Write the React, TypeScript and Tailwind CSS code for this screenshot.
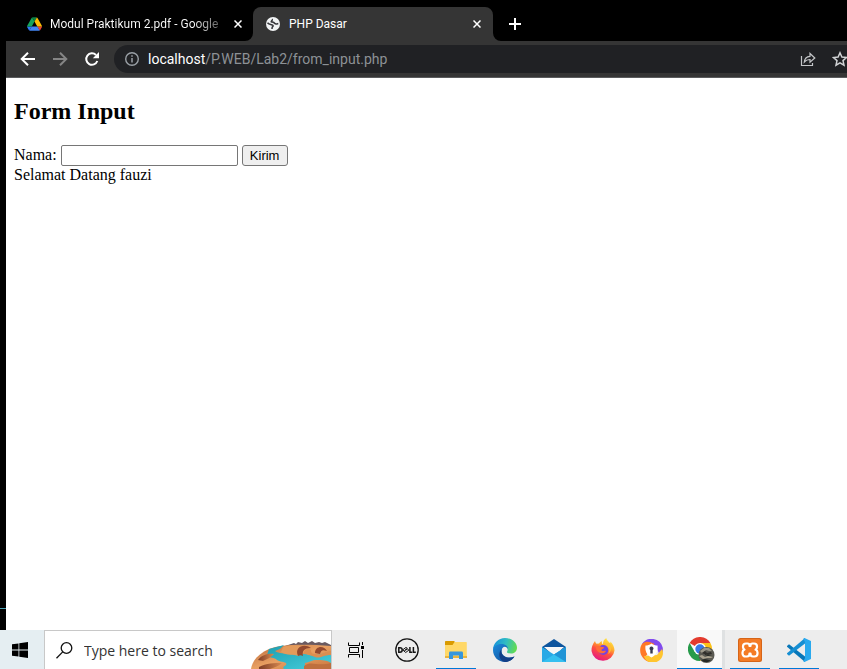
import type { ReactNode } from "react";

function DriveIcon() {
  return (
    <svg width="15" height="14" viewBox="0 0 87 78" aria-hidden="true">
      <path d="M6.6 66.9 10.4 73.500c.8 1.400 2 2.500 3.300 3.300L27.500 53H0c0 1.500.4 3.100 1.200 4.500z" fill="#2f7bf6" />
      <path d="M43.600 25 29.900 1.200c-1.400.8-2.500 1.900-3.300 3.300L1.200 48.500A9 9 0 0 0 0 53h27.500z" fill="#16a35a" />
      <path d="M73.600 76.800c1.300-.8 2.500-1.900 3.300-3.300l9.200-16c.8-1.400 1.200-2.900 1.200-4.500H59.800l5.900 11.500z" fill="#ea4335" />
      <path d="M43.600 25 57.400 1.200C56 .4 54.500 0 52.900 0H34.400c-1.600 0-3.200.5-4.500 1.200z" fill="#0b8043" />
      <path d="M59.800 53H27.500L13.700 76.800c1.400.8 2.900 1.200 4.500 1.200h50.800c1.600 0 3.200-.5 4.600-1.200z" fill="#4285f4" />
      <path d="M73.400 26.500 60.700 4.500c-.8-1.400-2-2.500-3.300-3.300L43.600 25l16.200 28h27.400c0-1.500-.4-3.100-1.200-4.500z" fill="#fbbc04" />
    </svg>
  );
}

function GlobeIcon() {
  return (
    <svg width="14" height="14" viewBox="0 0 14 14" aria-hidden="true">
      <circle cx="7" cy="7" r="7" fill="#f1f3f4" />
      <path
        d="M1.500 5.800 C2.500 7.200 4.500 7.500 6.300 8 C7.800 8.500 7 9.500 6.200 10.200 L6 12 M6 2.200 C7 3 5 4 5.200 4.700 C6.500 5.200 7.800 5.200 8.600 6.200 C9.500 7.500 11 6.800 12.300 6.500"
        stroke="#35363a"
        strokeWidth="1.500"
        fill="none"
      />
    </svg>
  );
}

function CloseIcon() {
  return (
    <svg width="8" height="8" viewBox="0 0 8 8" aria-hidden="true">
      <path d="M.5.5l7 7M7.500.5l-7 7" stroke="#fff" strokeWidth="1.500" />
    </svg>
  );
}

function Toolbar() {
  return (
    <div className="flex h-[37px] items-center border-b border-[#5a5b5d] bg-[#353535] pl-[14px]">
      <button aria-label="Back" className="mr-[16px] h-4 w-4 shrink-0">
        <svg width="16" height="16" viewBox="0 0 16 16" fill="none" stroke="#fff" strokeWidth="2">
          <path d="M15 8H2.500M8 1.700 1.700 8 8 14.300" />
        </svg>
      </button>
      <button aria-label="Forward" className="mr-[16px] h-4 w-4 shrink-0">
        <svg width="16" height="16" viewBox="0 0 16 16" fill="none" stroke="#858585" strokeWidth="2">
          <path d="M1 8h12.500M8 1.700 14.300 8 8 14.300" />
        </svg>
      </button>
      <button aria-label="Reload" className="mr-[14px] h-4 w-4 shrink-0">
        <svg width="16" height="16" viewBox="0 0 16 16">
          <path d="M13.300 10a5.700 5.700 0 1 1-1.300-6" stroke="#fff" strokeWidth="2" fill="none" />
          <path d="M15 1v6.200H8.800z" fill="#fff" />
        </svg>
      </button>
      <div className="flex h-7 min-w-0 flex-1 items-center rounded-l-full bg-[#202124] pl-[11px]">
        <svg width="14" height="14" viewBox="0 0 14 14" className="shrink-0" aria-hidden="true">
          <circle cx="7" cy="7" r="6.300" fill="none" stroke="#9aa0a6" strokeWidth="1.400" />
          <path d="M7 6v4.500M7 3.300v1.500" stroke="#9aa0a6" strokeWidth="1.500" />
        </svg>
        <p className="ml-[9px] flex-1 truncate font-[Roboto,sans-serif] text-[14px] leading-5 text-[#8d9196]">
          <span className="text-white">localhost</span>/P.WEB/Lab2/from_input.php
        </p>
        <button aria-label="Share this page" className="mr-[16px] h-4 w-4 shrink-0">
          <svg width="16" height="16" viewBox="0 0 16 16" fill="none" stroke="#c4c6c8">
            <path d="M1.500 5v9.500h11V12" strokeWidth="1.200" />
            <path d="M4.300 11c.3-3.500 2.200-5.400 5.700-5.700V2.500L14.800 7 10 11.200V8.500C7.500 8.500 5.800 9.200 4.300 11z" strokeWidth="1.200" />
          </svg>
        </button>
        <button aria-label="Bookmark this tab" className="h-4 w-[15px] shrink-0 overflow-hidden">
          <svg width="16" height="16" viewBox="0 0 16 16" fill="none" stroke="#d0d2d4" strokeWidth="1.500">
            <path d="M8 1.800l1.900 4.300 4.600.4-3.500 3.100 1 4.600L8 11.800l-4 2.400 1-4.600L1.500 6.500l4.600-.4z" />
          </svg>
        </button>
      </div>
    </div>
  );
}

function TabStrip() {
  return (
    <div className="flex h-[41px] items-end bg-black pl-[6px] font-[Roboto,sans-serif] text-[12px] text-white">
      <div className="flex h-[34px] w-[247px] items-center pl-[21px] pr-[11px]">
        <DriveIcon />
        <span className="ml-[8px] whitespace-nowrap bg-gradient-to-r from-white from-85% to-[#666] bg-clip-text text-transparent">
          Modul Praktikum 2.pdf - Google
        </span>
        <button aria-label="Close Modul Praktikum tab" className="ml-auto"><CloseIcon /></button>
      </div>
      <svg width="8" height="8" className="-ml-2 shrink-0" aria-hidden="true">
        <path d="M8 0v8H0a8 8 0 0 0 8-8z" fill="#353535" />
      </svg>
      <div className="flex h-[34px] w-[240px] items-center rounded-t-lg bg-[#353535] pl-[13px] pr-[12px]">
        <GlobeIcon />
        <span className="ml-[9px]">PHP Dasar</span>
        <button aria-label="Close PHP Dasar tab" className="ml-auto"><CloseIcon /></button>
      </div>
      <svg width="8" height="8" className="shrink-0" aria-hidden="true">
        <path d="M0 0v8h8a8 8 0 0 1-8-8z" fill="#353535" />
      </svg>
      <button aria-label="New tab" className="ml-2 flex h-[34px] items-center">
        <svg width="12" height="12" viewBox="0 0 12 12" stroke="#fff" strokeWidth="2">
          <path d="M6 0v12M0 6h12" />
        </svg>
      </button>
    </div>
  );
}

function FormPage() {
  return (
    <main className="min-h-[552px] flex-1 bg-white px-2 pt-[18px] font-['Liberation_Serif',serif] text-[16px] leading-[18px] text-black">
      <h2 className="mb-[19px] text-[24px] font-bold leading-[30px]">Form Input</h2>
      <form className="flex items-start gap-1" onSubmit={(e) => e.preventDefault()}>
        <label htmlFor="nama" className="pt-px">Nama:</label>
        <input
          id="nama"
          type="text"
          className="h-[21px] w-[177px] rounded-[2px] border border-[#767676] bg-white px-[2px] text-[13px]"
        />
        <button className="h-[21px] w-[46px] rounded-[3px] border border-[#767676] bg-[#efefef] text-center font-['Liberation_Sans',sans-serif] text-[13px] leading-[19px]">
          Kirim
        </button>
      </form>
      <p>Selamat Datang fauzi</p>
    </main>
  );
}

function CanyonArt() {
  return (
    <svg width="80" height="30" viewBox="0 0 80 30" className="shrink-0" aria-hidden="true">
      <defs>
        <linearGradient id="rock" x1="0" y1="0" x2="1" y2="1">
          <stop offset="0" stopColor="#b9693c" />
          <stop offset=".5" stopColor="#e9a062" />
          <stop offset="1" stopColor="#c9763f" />
        </linearGradient>
        <linearGradient id="shade" x1="0" y1="0" x2="1" y2="0">
          <stop offset="0" stopColor="#7e3c25" />
          <stop offset="1" stopColor="#d98a50" />
        </linearGradient>
        <linearGradient id="river" x1="0" y1="0" x2="1" y2="1">
          <stop offset="0" stopColor="#1d9fb2" />
          <stop offset="1" stopColor="#48cfdc" />
        </linearGradient>
      </defs>
      <path d="M34 7l9-3 2 1 2-2 4 1 3-2 3 2 4-2 3 2 4-1 3 1 3-1 6 3v4H34z" fill="#6a5a60" />
      <path d="M0 30C1 22 7 15 18 10 30 5 55 5 80 7v23z" fill="url(#rock)" />
      <path d="M18 10 33 6l-4 4-5 2c4 3 10 2 15 3l10 1c3-2 6-1 9 0 7 1 14-2 22-2v10c-4-3-9-3-14-3-6 0-6 2-12 3-1 2 2 3 4 6H33c-3-3 4-3 2-6-3-2-8-1-10-4-3-2-8-1-9-4z" fill="url(#river)" />
      <path d="M32 8c5-2 14-2 20-1l-4 10c-6-2-12 0-18-4z" fill="#e39a5b" />
      <path d="M47 17c-4-9 6-13 13-8-7 0-9 3-8 8-2-1-3-1-5 0zM64 14c0-7 9-8 12-2-5-2-6 0-7 3z" fill="#94492e" />
      <path d="M52 15c1-5 6-6 8-4 0 4 2 4 5 4 5 2 9-3 15-3v4c-8 0-11 4-16 2-5-2-8-3-12-3z" fill="#dc8e50" />
      <path d="M7 21c4-6 12-7 16-6-2 3-7 5-11 7z" fill="url(#shade)" />
      <path d="M8 28c7-4 16-4 23-4-3 3-7 4-12 6H8z" fill="url(#shade)" />
      <path d="M53 27c8-6 12 1 27-3v6H53z" fill="#bf6f3e" />
    </svg>
  );
}

function TaskViewIcon() {
  return (
    <svg width="17" height="16" viewBox="0 0 17 16" fill="none" stroke="#000" aria-hidden="true">
      <path d="M.5.500v3h11v-3M.5 15.500v-3h11v3M1.500 5.500h9v5h-9zM14.500 0v3M14.500 8v8" />
      <path d="M13 4h3v3h-3z" fill="#000" stroke="none" />
    </svg>
  );
}

function DellIcon() {
  return (
    <svg width="24" height="24" viewBox="0 0 24 24" aria-hidden="true" fill="none" stroke="#151515">
      <circle cx="12" cy="12" r="11.200" strokeWidth="1.300" />
      <path d="M3.800 9.800v4.400h1.200a2.200 2.200 0 0 0 0-4.400zM14.900 9v5.200H17.200M18.400 9v5.200H20.800" strokeWidth="1.500" />
      <path d="M7.700 11.900 11 9.400l1.300 1-2.700 2.100 3-1.400 1.300 1-3.200 2.400z" strokeWidth="1" />
    </svg>
  );
}

function ExplorerIcon() {
  return (
    <svg width="22" height="19" viewBox="0 0 22 19" aria-hidden="true">
      <path d="M0 1c0-.6.400-1 1-1h8l1 1v4H0z" fill="#d99a00" />
      <path d="M9.500 1H21c.6 0 .8.400.8 1v15H0V4h7.500z" fill="#ffd868" />
      <path d="M0 15h22v2H0z" fill="#ecb43b" />
      <path d="M4 18v-6c0-.8.5-1.500 1.300-1.500h11.400c.8 0 1.300.700 1.300 1.500v6h-4v-3.500H8V18z" fill="#3796dc" />
    </svg>
  );
}

function EdgeIcon() {
  return (
    <svg width="24" height="24" viewBox="0 0 24 24" aria-hidden="true">
      <defs>
        <linearGradient id="edgeTop" x1="0" y1=".4" x2="1" y2=".6">
          <stop offset="0" stopColor="#1592dc" />
          <stop offset=".5" stopColor="#31bdc2" />
          <stop offset="1" stopColor="#65dd4b" />
        </linearGradient>
        <linearGradient id="edgeLow" x1="0" y1="0" x2="1" y2="1">
          <stop offset="0" stopColor="#1b8bdc" />
          <stop offset="1" stopColor="#114793" />
        </linearGradient>
      </defs>
      <path d="M0 12C0 5 5.500 0 12 0s12 4.500 12 9.800c0 3.700-2.800 5.800-6 5.800-3 0-4.400-1-4-1.900 1.500-2 .5-5.700-4.500-5.700C4.500 8 0 10 0 12z" fill="url(#edgeTop)" />
      <path d="M0 12C0 8.500 4 6 8.500 6c4 0 6.500 2.500 6.500 5-2-4-6.500-2.500-6.500 2 0 4.500 5 8.500 13 5.500C19.500 22 16 24 12 24 5.500 24 0 19 0 12z" fill="url(#edgeLow)" />
      <path d="M8.800 11c-2 6 4 11 12.700 7.500C19 22.500 15 24 12 24 6 23 4.500 15 8.800 11z" fill="#123f87" />
    </svg>
  );
}

function MailIcon() {
  return (
    <svg width="24" height="23" viewBox="0 0 24 23" aria-hidden="true">
      <path d="M0 8 12 0l12 8v5H0z" fill="#0e559e" />
      <path d="M2 8h20l-10 9z" fill="#f7f7f7" />
      <path d="M0 8l12 7.500L24 8v15H0z" fill="#29a9e6" />
      <path d="M0 23 12 15.500 24 8v15z" fill="#35c0f0" />
      <path d="M12 15.500 24 23V8z" fill="#2194d6" />
    </svg>
  );
}

function FirefoxIcon() {
  return (
    <svg width="24" height="24" viewBox="0 0 24 24" aria-hidden="true">
      <defs>
        <linearGradient id="fox" x1=".8" y1="0" x2=".3" y2="1">
          <stop offset="0" stopColor="#fff04a" />
          <stop offset=".35" stopColor="#ffb22e" />
          <stop offset=".6" stopColor="#ff503f" />
          <stop offset="1" stopColor="#e31587" />
        </linearGradient>
      </defs>
      <path d="M4 3c.2 1.200.8 2 1.500 2.800L8 5.500c.7-1.300 1.800-2.100 3-2.600-.3 1-.2 2 .5 3L12 6c-.2-2.400 1.200-4.700 3.200-6 .4 2.400 2.300 3.500 4 5.300.2-.7.200-1.200 0-1.800 2.500 2 4.300 5.500 4.300 9A11.600 11.600 0 0 1 .5 13C.3 9 1.800 6 4 3z" fill="url(#fox)" />
      <circle cx="12.300" cy="12" r="5" fill="#7543df" />
      <path d="M5 8c3-.8 4 .2 5 .7 1 .4 3 0 3.200.8-.3 1.200-2.300 1-2.800 2.500.7 1.800 3.200.3 4.600 1-1 2.500-4.500 3-7 1.500C6 13 4.500 11 5 8z" fill="#ff6b36" />
      <path d="M14 6c4 1 6 6 3 10 4-2 4-8 1.500-11z" fill="#ffbd35" />
    </svg>
  );
}

function SecureBrowserIcon() {
  return (
    <svg width="23" height="23" viewBox="0 0 23 23" aria-hidden="true">
      <path d="M2 5a11.500 11.500 0 0 1 20.700 3.500C23.500 13 22 15 20 17L16 7z" fill="#824bed" />
      <path d="M2 5c4-4 9-2 12.500 0L6 17l4 6C3 22-3 13 2 5z" fill="#ff7926" />
      <path d="M4 17l13-1 5-6c4 8-5 17-14 12.500C6 21.500 4.500 19.500 4 17z" fill="#ffc52f" />
      <path d="M11.500 4.500c2 1.500 4 2 6 2 .7 5-1 9.500-6 12-5-2.500-6.700-7-6-12 2 0 4-.5 6-2z" fill="#fff" />
      <path d="M9.500 9.500a2 2 0 1 1 3.200 1.600v3.400h-2.400v-3.400c-.5-.4-.8-.9-.8-1.600z" fill="#36394e" />
    </svg>
  );
}

function ChromeIcon() {
  return (
    <svg width="28" height="27" viewBox="0 0 28 27" aria-hidden="true">
      <path d="M12 12 1.600 6A12 12 0 0 1 22.400 6H12z" fill="#e33b2e" />
      <path d="M1.600 6A12 12 0 0 0 12 24l5.200-9H6.800z" fill="#279b4b" />
      <path d="M22.400 6A12 12 0 0 1 12 24l5.200-9L12 6z" fill="#fbc116" />
      <circle cx="12" cy="12" r="6" fill="#fff" />
      <circle cx="12" cy="12" r="4.700" fill="#3879e8" />
      <circle cx="18.500" cy="18" r="8" fill="#5b5a53" />
      <path d="M12 14l4-3 5 0 3 3-3 0-3-1-4 3z" fill="#9c988a" />
      <path d="M14 16l3-2 2 2 4-1 1 2-4 1-4-1z" fill="#302f2b" />
      <path d="M11 19l3-1 3 2 3-1 5 1-2 1-4 0-4 1z" fill="#aaa28f" />
      <path d="M17 17l2 1 5 0-4 1-3-1zM13 23l4-1 4 1 2 0-3 2-4 0z" fill="#242825" />
    </svg>
  );
}

function XamppIcon() {
  return (
    <svg width="24" height="24" viewBox="0 0 24 24" aria-hidden="true">
      <rect width="24" height="24" rx="2.500" fill="#d66518" />
      <rect x="1" y="1" width="22" height="22" rx="2" fill="#f47b25" />
      <path d="M8 5.500h1.500a2 2 0 0 1 2 2v.5h1v-.5a2 2 0 0 1 2-2H16a3 3 0 0 1 3 3V9a3 3 0 0 1-1.500 2.600A3.200 3.200 0 0 1 19.500 14.500v1a3 3 0 0 1-3 3H15a2.500 2.500 0 0 1-2.500-2.500v-.5h-1v.5A2.500 2.500 0 0 1 9 18.500H7.500a3 3 0 0 1-3-3v-1a3.200 3.200 0 0 1 2-2.900A3 3 0 0 1 5 9v-.5a3 3 0 0 1 3-3z" fill="none" stroke="#fff" strokeWidth="2.200" strokeLinejoin="round" />
    </svg>
  );
}

function CodeIcon() {
  return (
    <svg width="24" height="24" viewBox="0 0 24 24" aria-hidden="true">
      <path d="M0 8l2-1.800 16 12.300V24L0 8.800z" fill="#0877b9" />
      <path d="M0 16l2 1.800L18 5.500V0L0 15.200z" fill="#168fd3" />
      <path d="M17.500 0 24 3v18l-6.500 3c-.7 0-1-.3-1-1l1.500-3V4l-1.500-3c0-.7.300-1 1-1z" fill="#29a9ee" />
    </svg>
  );
}

function TaskButton({ label, open, active, children }: { label: string; open?: boolean; active?: boolean; children: ReactNode }) {
  return (
    <button
      aria-label={label}
      className={`flex h-full w-[49px] shrink-0 flex-col items-center ${active ? "border-l border-r-[3px] border-l-[#ededed] border-r-[#dfe1e2] bg-[#f9f9f9] pl-1" : ""}`}
    >
      <span className="flex w-full flex-1 items-center justify-center pt-[2px]">{children}</span>
      <span className={`h-px ${active ? "-ml-1 w-[45px]" : "w-10"} ${open ? "bg-[#0078d7]" : ""}`} />
    </button>
  );
}

function Taskbar() {
  return (
    <footer className="flex h-[39px] shrink-0 items-stretch overflow-hidden bg-[#ededed]">
      <button aria-label="Start" className="flex w-11 shrink-0 items-center bg-[#e5eef2] pl-3">
        <svg width="16" height="16" viewBox="0 0 16 16">
          <path d="M0 2.300 6.500 1.400v6.200H0zM7.300 1.200 16 0v7.600H7.300zM0 8.400h6.500v6.200L0 13.700zM7.300 8.400H16V16l-8.700-1.200z" />
        </svg>
      </button>
      <label className="flex w-[288px] shrink-0 items-end border border-b-0 border-[#c8c8c8] bg-white pl-[11px]">
        <svg width="17" height="17" viewBox="0 0 17 17" fill="none" stroke="#111" strokeWidth="1.300" className="mb-[10px] shrink-0" aria-hidden="true">
          <circle cx="10.500" cy="6" r="5.300" />
          <path d="M6.700 9.900.5 16.300" />
        </svg>
        <input
          aria-label="Type here to search"
          placeholder="Type here to search"
          className="ml-[11px] h-[37px] min-w-0 flex-1 bg-transparent text-[14px] text-[#333] outline-none placeholder:text-[#333] placeholder:opacity-100"
        />
        <CanyonArt />
      </label>
      <div className="flex pr-6">
        <button aria-label="Task View" className="flex w-[50px] shrink-0 items-center justify-center pr-[2px]"><TaskViewIcon /></button>
        <TaskButton label="Dell"><DellIcon /></TaskButton>
        <TaskButton label="File Explorer" open><ExplorerIcon /></TaskButton>
        <TaskButton label="Microsoft Edge"><EdgeIcon /></TaskButton>
        <TaskButton label="Mail"><MailIcon /></TaskButton>
        <TaskButton label="Firefox"><FirefoxIcon /></TaskButton>
        <TaskButton label="Secure Browser"><SecureBrowserIcon /></TaskButton>
        <TaskButton label="Google Chrome" open active><ChromeIcon /></TaskButton>
        <TaskButton label="XAMPP" open><XamppIcon /></TaskButton>
        <TaskButton label="Visual Studio Code" open><CodeIcon /></TaskButton>
      </div>
    </footer>
  );
}

export default function App() {
  return (
    <div className="flex min-h-screen flex-col overflow-hidden bg-black font-['Open_Sans','Noto_Sans',sans-serif]">
      <TabStrip />
      <div className="flex flex-1">
        <div className="flex w-[6px] shrink-0 flex-col justify-end pb-[21px]">
          <div className="h-px bg-[#4ba3b5]" />
        </div>
        <div className="flex min-w-0 flex-1 flex-col">
          <Toolbar />
          <FormPage />
        </div>
      </div>
      <Taskbar />
    </div>
  );
}
